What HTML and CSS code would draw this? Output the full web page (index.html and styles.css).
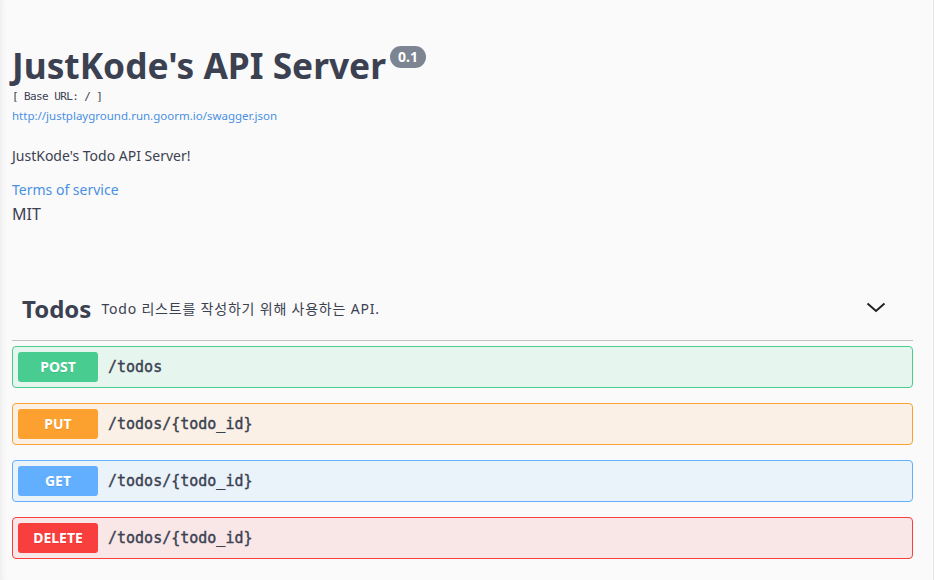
FILE: index.html
```html
<!DOCTYPE html>
<html lang="ko">
<head>
<meta charset="utf-8">
<title>JustKode's API Server</title>
<link rel="stylesheet" href="styles.css">
</head>
<body>
<div class="wrapper">
  <section class="info">
    <hgroup class="main">
      <h2 class="title">JustKode's API Server<span class="version">0.1</span></h2>
      <pre class="base-url">[ Base URL: / ]</pre>
      <a class="spec-link" href="#">http://justplayground.run.goorm.io/swagger.json</a>
    </hgroup>
    <p class="description">JustKode's Todo API Server!</p>
    <a class="terms" href="#">Terms of service</a>
    <div class="license">MIT</div>
  </section>

  <section class="tag-section">
    <div class="opblock-tag">
      <span class="tag-name">Todos</span>
      <span class="tag-desc">Todo 리스트를 작성하기 위해 사용하는 API.</span>
      <svg class="arrow" width="20" height="20" viewBox="0 0 20 20"><path d="M1.5 5.5 L10 13 L18.5 5.5" fill="none" stroke="#222" stroke-width="2"/></svg>
    </div>
    <div class="opblock post"><span class="method">POST</span><span class="path">/todos</span></div>
    <div class="opblock put"><span class="method">PUT</span><span class="path">/todos/{todo_id}</span></div>
    <div class="opblock get"><span class="method">GET</span><span class="path">/todos/{todo_id}</span></div>
    <div class="opblock delete"><span class="method">DELETE</span><span class="path">/todos/{todo_id}</span></div>
  </section>
</div>
</body>
</html>
```
FILE: styles.css
```css
html, body {
  margin: 0;
  height: 100%;
}
body {
  background: #fafafa;
  font-family: "Noto Sans", "Noto Sans CJK KR", sans-serif;
  color: #3b4151;
  box-shadow: inset 7px 0 6px -5px rgba(0, 0, 0, 0.06), inset -1px 0 0 #e6e6e6;
  overflow: hidden;
}
.wrapper {
  padding: 0 21px 0 12px;
}
.info {
  padding-top: 44px;
  margin-bottom: 53px;
}
.main {
  margin: 0;
}
.title {
  margin: 0;
  font-size: 35.3px;
  line-height: 42px;
  font-weight: 700;
  color: #3b4151;
}
.version {
  display: inline-block;
  vertical-align: top;
  margin: 2px 0 0 4px;
  padding: 0 8px;
  height: 22px;
  line-height: 22px;
  border-radius: 11px;
  background: #7d8492;
  color: #fff;
  font-size: 14px;
  font-weight: 700;
}
.base-url {
  margin: 3px 0 0;
  font-family: "DejaVu Sans Mono", monospace;
  font-size: 11px;
  letter-spacing: -0.6px;
  line-height: 16px;
  color: #3b4151;
}
.spec-link {
  display: block;
  margin-top: 3px;
  font-size: 11.5px;
  line-height: 16px;
  color: #4990e2;
  text-decoration: none;
}
.description {
  margin: 22px 0 0;
  font-size: 14px;
  line-height: 20px;
}
.terms {
  display: block;
  margin-top: 14px;
  font-size: 14px;
  line-height: 20px;
  color: #4990e2;
  text-decoration: none;
}
.license {
  margin-top: 4px;
  font-size: 16px;
  line-height: 20px;
}
.opblock-tag {
  display: flex;
  align-items: center;
  padding: 10px 27px 11px 10px;
  height: 42px;
  margin-bottom: 5px;
  border-bottom: 1px solid rgba(59, 65, 81, 0.3);
}
.tag-name {
  font-size: 24px;
  font-weight: 700;
}
.tag-desc {
  flex: 1;
  padding: 0 10px;
  font-size: 14px;
  letter-spacing: 0.8px;
}
.arrow {
  display: block;
}
.opblock {
  display: flex;
  align-items: center;
  height: 40px;
  padding: 0 5px;
  margin-bottom: 15px;
  border: 1px solid;
  border-radius: 4px;
}
.method {
  width: 80px;
  height: 30px;
  line-height: 30px;
  border-radius: 3px;
  text-align: center;
  color: #fff;
  font-size: 14px;
  font-weight: 700;
  text-shadow: 0 1px 0 rgba(0, 0, 0, 0.1);
}
.path {
  padding: 0 10px;
  font-family: "DejaVu Sans Mono", monospace;
  font-size: 15px;
  font-weight: 400;
  -webkit-text-stroke: 0.4px #3b4151;
  color: #3b4151;
}
.post { border-color: #49cc90; background: rgba(73, 204, 144, 0.1); }
.post .method { background: #49cc90; }
.put { border-color: #fca130; background: rgba(252, 161, 48, 0.1); }
.put .method { background: #fca130; }
.get { border-color: #61affe; background: rgba(97, 175, 254, 0.1); }
.get .method { background: #61affe; }
.delete { border-color: #f93e3e; background: rgba(249, 62, 62, 0.1); }
.delete .method { background: #f93e3e; }
```
